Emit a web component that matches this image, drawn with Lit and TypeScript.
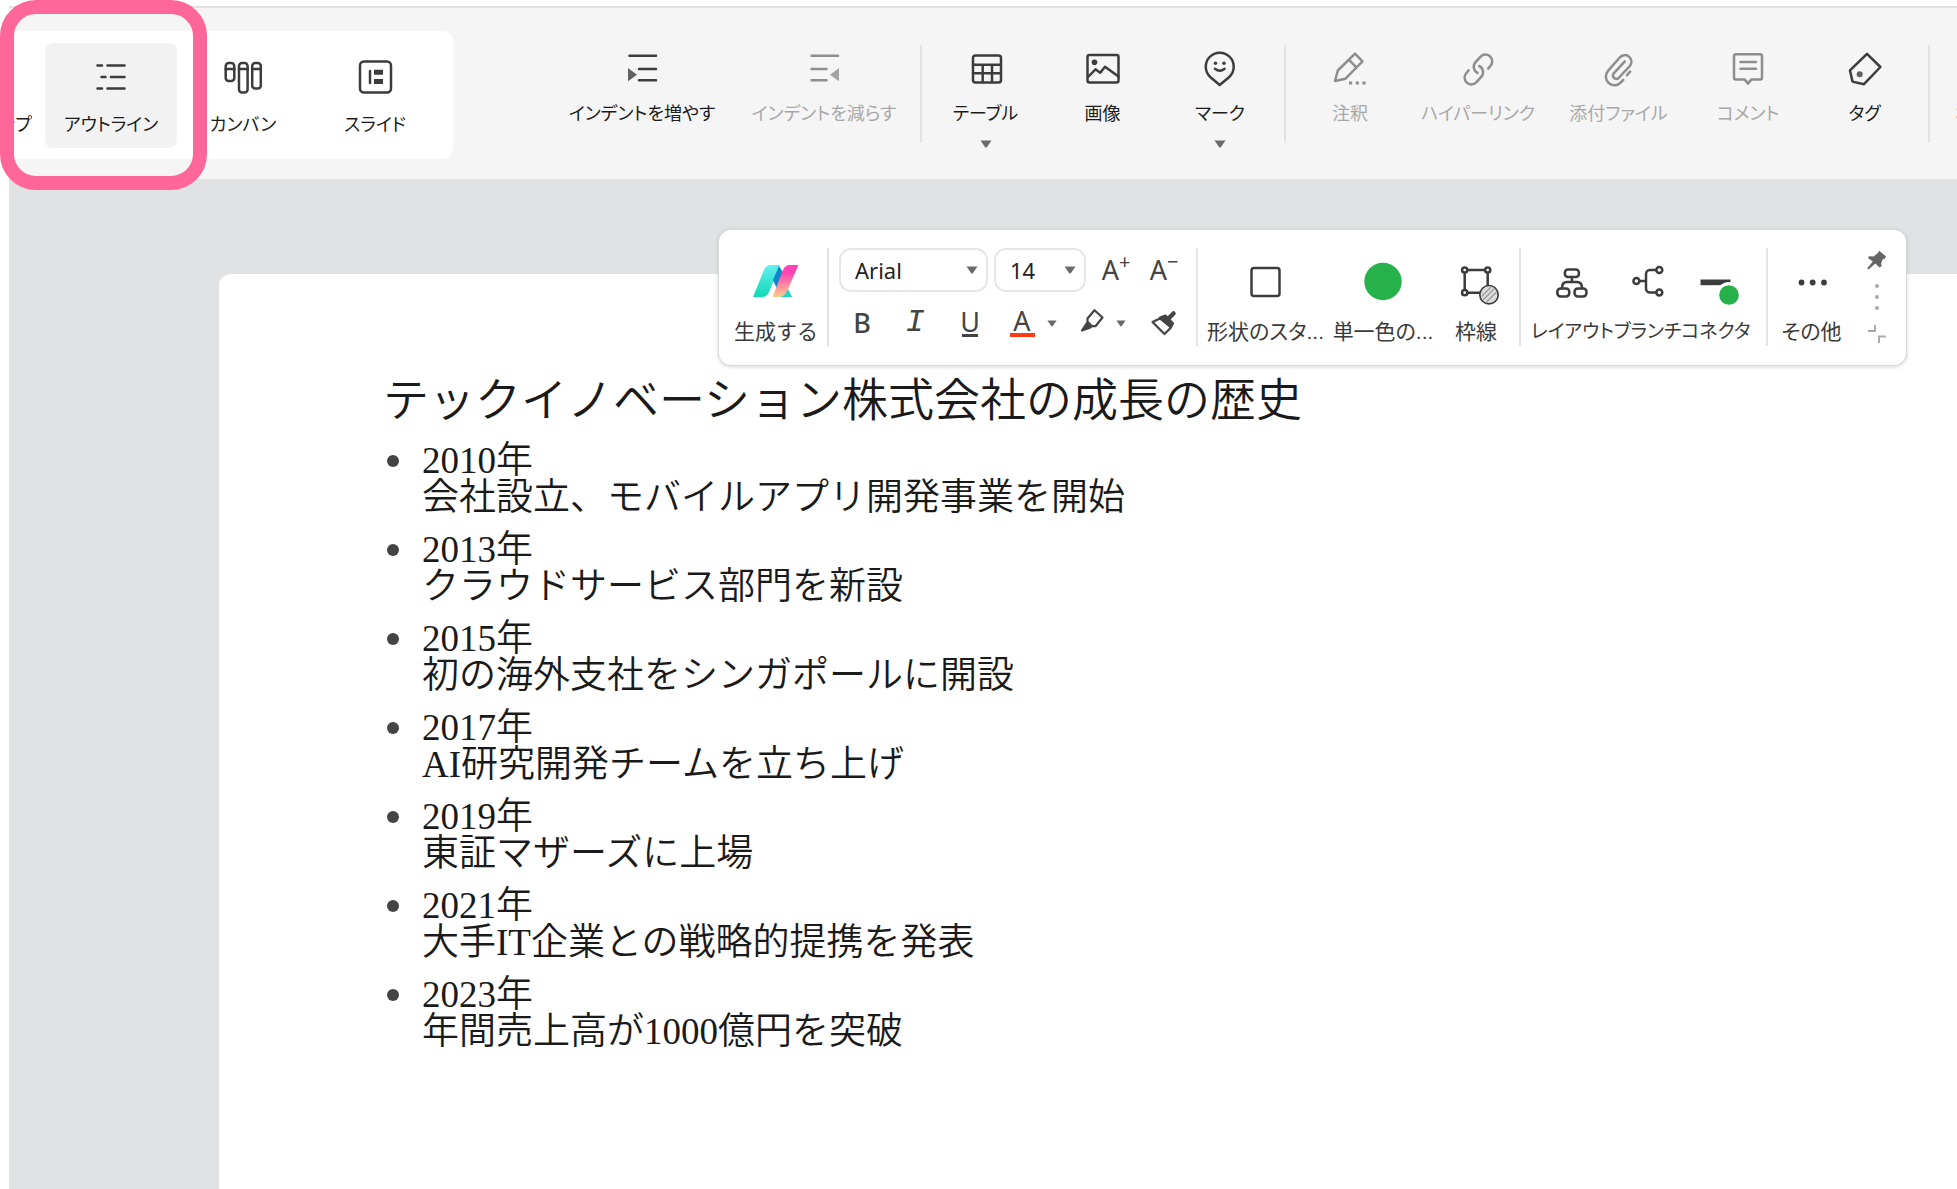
import { LitElement, html, css, svg, nothing, type TemplateResult } from "lit";
import { customElement, property } from "lit/decorators.js";
import { classMap } from "lit/directives/class-map.js";

type Art = ReturnType<typeof svg>;

const art: Record<string, Art> = {
  outline: svg`<path d="M6.5 8.5H11M16.5 8.5H33.5M10.5 20H14.5M20 20H33.5M6.5 31.5H11M16.5 31.5H33.5"/>`,
  kanban: svg`<rect x="2.7" y="6" width="8.6" height="18" rx="3"/><rect x="16" y="6" width="8.6" height="29.5" rx="3"/><rect x="29.2" y="6" width="8.6" height="25.5" rx="3"/><path d="M2.7 12H11.3M16 12H24.6M29.2 12H37.8"/>`,
  slide: svg`<rect x="5" y="4.5" width="31" height="31" rx="4"/><path d="M15 14V26"/><path class="solid" d="M19 12.7h9v5h-9zM19 22h9v5h-9z"/>`,
  indent: svg`<path d="M7.5 7.7H34M17 21H34M17 32.3H34"/><path class="solid soft" d="M6 20L15 26.7L6 33.3Z"/>`,
  outdent: svg`<path d="M7.5 7.7H34M7.5 21H22.5M7.5 32.3H22.5"/><path class="solid soft" d="M35 20L26 26.7L35 33.3Z"/>`,
  table: svg`<rect x="7" y="7.5" width="28" height="27" rx="2.5"/><path d="M7 16.7H35M7 25.3H35M16.7 16.7V34M26 16.7V34"/>`,
  image: svg`<rect x="4.5" y="7" width="31" height="27.5" rx="2"/><circle class="solid" cx="11.5" cy="14.3" r="2.8"/><path d="M5 29L12.5 21.3L17.2 24.7L22 18.7L35.5 28.5"/>`,
  mark: svg`<path d="M19.7 37L10.5 29.2A14 14 0 1 1 29 29.2Z"/><circle class="solid" cx="15.5" cy="15.3" r="1.7"/><circle class="solid" cx="24" cy="15.3" r="1.7"/><path d="M15 20.8Q19.8 24.6 24.6 20.8"/>`,
  note: svg`<path d="M5 33L7.8 22.5L25 5.6L32.5 13.3L15.5 30.7ZM19 11.8L26.4 19.4"/><path class="solid" d="M19 33.4h3.2v3.2H19zM25.7 33.4h3.2v3.2h-3.2zM32.4 33.4h3.2v3.2h-3.2z"/>`,
  link: svg`<path d="M30.2 20.6L32.6 17.8A6.8 6.8 0 0 0 22.6 8.6L17.6 14.2A6.8 6.8 0 0 0 19.6 25"/><path transform="rotate(180 20.4 21.5)" d="M30.2 20.6L32.6 17.8A6.8 6.8 0 0 0 22.6 8.6L17.6 14.2A6.8 6.8 0 0 0 19.6 25"/>`,
  clip: svg`<path d="M24.3 31.8L21.9 34.3A8.6 8.6 0 0 1 9 22.8L21.2 9A6.6 6.6 0 0 1 31 17.8L19.6 30A3.4 3.4 0 0 1 14.5 25.6L25.8 13.3M31.2 23.6L28 27.2"/>`,
  comment: svg`<path d="M8 6.2H32A2 2 0 0 1 34 8.2V29.6A2 2 0 0 1 32 31.6H23.2L20 35.6L16.8 31.6H8A2 2 0 0 1 6 29.6V8.2A2 2 0 0 1 8 6.2Z"/><path d="M12.5 14H28M12.5 20.8H28"/>`,
  tag: svg`<path d="M22 5.8L35.4 19L19 36.2L7.5 33.6L5 22.4Z"/><circle class="solid soft" cx="14.7" cy="26.3" r="3"/>`,
  find: svg`<circle cx="18" cy="18" r="11"/><path d="M26 26L34 34"/>`,
  shape: svg`<rect x="6.5" y="6" width="28" height="28" rx="2.5"/>`,
  fill: svg`<circle class="green" cx="20" cy="19.5" r="18.7"/>`,
  border: svg`<path d="M12 8H28.5M8.7 11V27.5M31.7 11V24M12 30.7H24"/><circle cx="8.7" cy="8" r="2.6"/><circle cx="31.7" cy="8" r="2.6"/><circle cx="8.7" cy="30.7" r="2.6"/><circle class="ball" cx="33" cy="32.7" r="9.2"/><path class="hatch" d="M26 34L34.5 25.5M27.5 37.5L38 27M31 39.5L40 30.5"/>`,
  layout: svg`<rect x="12.9" y="7.5" width="14" height="7.5" rx="3"/><rect x="5.3" y="26.5" width="12" height="8" rx="3.4"/><rect x="22.5" y="26.5" width="12" height="8" rx="3.4"/><path d="M19.9 15V20M10 26C10 22 11.5 20 15 20H25C28.5 20 30 22 30 26"/>`,
  branch: svg`<circle cx="8.4" cy="19" r="3"/><circle cx="31.3" cy="8" r="3"/><circle cx="31.3" cy="30.5" r="3"/><path d="M28 8H22A4 4 0 0 0 18 12V26.5A4 4 0 0 0 22 30.5H28M11.5 19H18"/>`,
  connector: svg`<path class="solid" d="M4.5 17.5H34.5V23.2H4.5Z"/><circle class="halo" cx="33" cy="33" r="13"/><circle class="green" cx="33" cy="33" r="9.8"/>`,
  more: svg`<circle class="solid" cx="9.5" cy="20.5" r="2.9"/><circle class="solid" cx="20.7" cy="20.5" r="2.9"/><circle class="solid" cx="32" cy="20.5" r="2.9"/>`,
};

const chevron = html`<svg class="chevron" viewBox="0 0 12 8" aria-hidden="true"><path d="M.5 .5H11.5L7 6.9Q6 8 5 6.9Z"/></svg>`;

const iconStyles = css`
  .icon {
    width: 40px;
    height: 40px;
    overflow: visible;
    fill: none;
    stroke: currentColor;
    stroke-width: 2.5;
    stroke-linecap: round;
    stroke-linejoin: round;
    flex: none;
  }
  .icon .solid { fill: currentColor; stroke: none; }
  .icon .soft { opacity: 0.8; }
  .icon .green { fill: #27b14b; stroke: none; }
  .icon .halo { fill: #fff; stroke: none; }
  .icon .ball { fill: #ddd; stroke-width: 1.6; }
  .icon .hatch { stroke: #999; stroke-width: 1.2; }
  .chevron { width: 12px; height: 8px; fill: #6a6a6a; flex: none; }
`;

const buttonReset = css`
  * { box-sizing: border-box; }
  button {
    margin: 0;
    padding: 0;
    border: 0;
    background: none;
    font: inherit;
    color: inherit;
    cursor: pointer;
  }
`;

@customElement("tool-button")
export class ToolButton extends LitElement {
  @property() icon = "";
  @property() label = "";
  @property({ type: Boolean }) menu = false;
  @property({ type: Boolean }) disabled = false;
  @property({ type: Boolean }) floating = false;

  static styles = [
    buttonReset,
    iconStyles,
    css`
      :host { display: flex; justify-content: center; min-width: 0; }
      .tool {
        display: flex;
        flex-direction: column;
        align-items: center;
        align-self: flex-start;
        gap: 11px;
        color: #3c3c3c;
        white-space: nowrap;
      }
      .text {
        font-size: 18px;
        line-height: 30px;
        color: #1c1c1c;
        font-feature-settings: "palt";
      }
      .tool:disabled { color: #8e8e8e; cursor: default; }
      .tool:disabled .text { color: #a8a8a8; }
      .floating { gap: 15px; }
      .floating .text { font-size: var(--label-size, 21px); color: #3a3a3a; }
    `,
  ];

  render() {
    return html`<button type="button" class=${classMap({ tool: true, floating: this.floating })} ?disabled=${this.disabled}>
      <svg class="icon" viewBox="0 0 40 40" aria-hidden="true">${art[this.icon]}</svg>
      <span class="text">${this.label}</span>
      ${this.menu ? chevron : nothing}
    </button>`;
  }
}

@customElement("view-switch")
export class ViewSwitch extends LitElement {
  static styles = [
    buttonReset,
    iconStyles,
    css`
      :host {
        display: flex;
        flex: none;
        align-items: center;
        padding: 12px 12px 12px 0;
        background: #fff;
        border-radius: 0 10px 10px 0;
      }
      .view {
        display: flex;
        flex-direction: column;
        align-items: center;
        gap: 13px;
        width: 132px;
        height: 105px;
        padding-top: 14px;
        border-radius: 8px;
        color: #3c3c3c;
      }
      .clipped {
        width: 23px;
        margin-right: 13px;
        align-items: flex-end;
        overflow: hidden;
      }
      .selected { background: #f2f2f2; }
      .text {
        font-size: 18px;
        line-height: 30px;
        color: #1c1c1c;
        white-space: nowrap;
        font-feature-settings: "palt";
      }
      .spacer { width: 40px; height: 40px; flex: none; }
    `,
  ];

  render() {
    const views = [
      { icon: "outline", label: "アウトライン" },
      { icon: "kanban", label: "カンバン" },
      { icon: "slide", label: "スライド" },
    ];
    return html`
      <button type="button" class="view clipped"><span class="spacer"></span><span class="text">マップ</span></button>
      ${views.map(
        (v, i) => html`<button type="button" aria-pressed=${i === 0} class=${classMap({ view: true, selected: i === 0 })}>
          <svg class="icon" viewBox="0 0 40 40" aria-hidden="true">${art[v.icon]}</svg>
          <span class="text">${v.label}</span>
        </button>`
      )}
    `;
  }
}

@customElement("format-bar")
export class FormatBar extends LitElement {
  static styles = [
    buttonReset,
    iconStyles,
    css`
      :host {
        display: flex;
        height: 135px;
        padding: 18px 7px 19px 0;
        background: #fff;
        border-radius: 12px;
        box-shadow: 0 0 0 1px #d8d9da, 0 1px 5px rgba(0, 0, 0, 0.22);
      }
      .group {
        display: grid;
        flex: none;
        padding-top: 14px;
        border-right: 2px solid #e4e4e4;
      }
      .generate { grid-template-columns: 102px; padding-left: 6px; }
      .shapes { grid-template-columns: 135px 100px 86px; }
      .links { display: flex; width: 247px; padding-left: 10px; --label-size: 19px; }
      .extra { grid-template-columns: 87px; border-right: 0; }
      .brand {
        display: flex;
        flex-direction: column;
        align-items: center;
        gap: 15px;
        align-self: start;
        color: #3a3a3a;
      }
      .brand svg { width: 46px; height: 32px; margin: 3px 0 5px; }
      .text { font-size: 21px; line-height: 30px; }
      .fonts {
        display: flex;
        flex-direction: column;
        flex: none;
        width: 369px;
        gap: 9px;
        padding-left: 10px;
        border-right: 2px solid #e4e4e4;
        color: #444;
        font-family: "Noto Sans", sans-serif;
      }
      .row { display: flex; align-items: center; height: 44px; }
      .pick { display: grid; align-items: center; margin-right: 6px; }
      .pick > * { grid-area: 1 / 1; }
      .pick .chevron { justify-self: end; margin-right: 10px; pointer-events: none; }
      select {
        appearance: none;
        height: 44px;
        padding: 0 14px;
        border: 2px solid #e6e6e6;
        border-radius: 12px;
        background: #fff;
        color: #222;
        font: 22px "Noto Sans", sans-serif;
      }
      .family select { width: 149px; }
      .size select { width: 92px; }
      .glyph {
        display: flex;
        align-items: center;
        justify-content: center;
        width: 50px;
        height: 44px;
        font-size: 27px;
        line-height: 30px;
      }
      .step { width: 48px; }
      .step sup { font-size: 20px; line-height: 10px; align-self: flex-start; padding-top: 9px; }
      .bold { width: 46px; font-weight: 500; }
      .italic { width: 60px; font-family: "Liberation Mono", monospace; font-style: italic; font-size: 32px; }
      .under span {
        display: flex;
        justify-content: center;
        width: 16px;
        line-height: 24px;
        border-bottom: 3px solid currentColor;
      }
      .color { width: 72px; gap: 12px; padding-left: 4px; }
      .color span { width: 25px; line-height: 24px; border-bottom: 4px solid #ff3b12; text-align: center; }
      .color .chevron, .marker .chevron { width: 10px; height: 7px; }
      .marker { width: 72px; gap: 10px; }
      .draw {
        width: 26px;
        height: 26px;
        overflow: visible;
        fill: none;
        stroke: currentColor;
        stroke-width: 2.2;
        stroke-linejoin: round;
        stroke-linecap: round;
      }
      .draw .solid { fill: currentColor; }
      .handle { display: flex; flex-direction: column; align-items: center; width: 44px; padding-top: 2px; gap: 13px; }
      .handle svg { display: block; width: 20px; height: 20px; fill: none; stroke: #aaa; stroke-width: 2; overflow: visible; }
      .handle .pin { fill: #666; stroke: none; }
      .handle .dots { height: 28px; fill: #aaa; stroke: none; }
    `,
  ];

  render() {
    const tool = (icon: string, label: string): TemplateResult =>
      html`<tool-button floating icon=${icon} label=${label}></tool-button>`;
    return html`
      <div class="group generate">
        <button type="button" class="brand">
          <svg viewBox="0 0 46 32" aria-hidden="true">
            <defs>
              <linearGradient id="teal" x1="0" y1="0" x2="0" y2="1"><stop offset="0" stop-color="#66eef0" /><stop offset="1" stop-color="#10d9b4" /></linearGradient>
              <linearGradient id="pink" x1="0" y1="0" x2="0" y2="1"><stop offset=".25" stop-color="#ff44b4" /><stop offset="1" stop-color="#ffcf8e" /></linearGradient>
            </defs>
            <path fill="#1ad6c8" d="M33 20L39 32H27Z" />
            <path fill="url(#teal)" d="M0 32L11 5Q13 0 18 0H27L16 27Q14 32 9 32Z" />
            <path fill="#1086cc" d="M26 1L31 9L24 24L20 15Z" />
            <path fill="url(#pink)" d="M19.5 32L30 5Q32 0 37 0H45.5L35 24Q32 32 26 32Z" />
          </svg>
          <span class="text">生成する</span>
        </button>
      </div>
      <div class="fonts">
        <div class="row">
          <label class="pick family"><select aria-label="フォント"><option>Arial</option></select>${chevron}</label>
          <label class="pick size"><select aria-label="フォントサイズ"><option>14</option></select>${chevron}</label>
          <button type="button" class="glyph step">A<sup>+</sup></button>
          <button type="button" class="glyph step">A<sup>−</sup></button>
        </div>
        <div class="row">
          <button type="button" class="glyph bold">B</button>
          <button type="button" class="glyph italic">I</button>
          <button type="button" class="glyph under"><span>U</span></button>
          <button type="button" class="glyph color"><span>A</span>${chevron}</button>
          <button type="button" class="glyph marker" aria-label="蛍光ペン">
            <svg class="draw" viewBox="0 0 26 26"><path d="M14.5 .2L22.5 7.5L15.5 16.2H10.5L7.5 12.5V8.5ZM7.5 11.5L12 16.5" /><path class="solid" d="M6.5 13.5L2 20.5L10.5 17.5Z" /></svg>
            ${chevron}
          </button>
          <button type="button" class="glyph" aria-label="書式のコピー">
            <svg class="draw" viewBox="0 0 26 26"><path d="M1.5 12L9 8.5L20 17.5L13.5 24Z" /><path class="solid" d="M9 7.5L14.5 5.5L22 13.5L20 17Z" /><path d="M17.5 8.5L22.5 3.5" stroke-width="4.5" /></svg>
          </button>
        </div>
      </div>
      <div class="group shapes">
        ${tool("shape", "形状のスタ...")} ${tool("fill", "単一色の...")} ${tool("border", "枠線")}
      </div>
      <div class="group links">
        ${tool("layout", "レイアウト")}${tool("branch", "ブランチ")}${tool("connector", "コネクタ")}
      </div>
      <div class="group extra">${tool("more", "その他")}</div>
      <div class="handle">
        <button type="button" aria-label="固定">
          <svg class="pin" viewBox="0 0 20 20"><path d="M12.3 .7L19 6.6L17.4 9L15.9 9L14.2 13.2L14.5 16.3L12.5 17.5L8.3 13.4L1.5 19.5L.2 18.3L5.8 11.5L1 8L2 6.2L6.5 6.4L11 3Z" /></svg>
        </button>
        <svg class="dots" viewBox="0 0 20 28" aria-hidden="true"><circle cx="10" cy="3" r="2" /><circle cx="10" cy="14" r="2" /><circle cx="10" cy="25" r="2" /></svg>
        <button type="button" aria-label="折りたたむ">
          <svg viewBox="0 0 20 20"><path d="M8 1V7H1M19 12.5H12V19" /></svg>
        </button>
      </div>
    `;
  }
}

@customElement("app-root")
export class AppRoot extends LitElement {
  static styles = [
    buttonReset,
    css`
      :host {
        display: flex;
        flex-direction: column;
        position: relative;
        min-height: 100vh;
        padding: 6px 0 0 9px;
        box-sizing: border-box;
        overflow: hidden;
        background: #fff;
        font-family: "Liberation Sans", "Noto Sans CJK JP", sans-serif;
      }
      .ribbon {
        display: flex;
        height: 173px;
        padding: 23px 0 20px;
        border-top: 2px solid #e0e0e0;
        background: #f5f5f5;
        overflow: hidden;
      }
      .tools {
        display: grid;
        flex: none;
        height: 98px;
        margin-top: 14px;
        padding: 3px 5px 0;
        border-right: 2px solid #e2e2e2;
      }
      .indents { grid-template-columns: 182px 182px; margin-left: 93px; }
      .inserts { grid-template-columns: 117px 117px 118px; }
      .notes { grid-template-columns: 118px 138px 143px 116px 117px; }
      .rest { grid-template-columns: 130px; border-right: 0; }
      .stage {
        display: flex;
        flex: 1;
        padding: 95px 0 0 210px;
        background: #e1e2e4;
      }
      .sheet {
        flex: 1;
        padding: 99px 40px 40px 164px;
        border-radius: 12px 0 0 0;
        background: #fff;
        color: #1a1a1a;
        font-family: "Liberation Serif", "Noto Sans CJK JP", serif;
      }
      h1 { margin: 0 0 13px; font-size: 46px; line-height: 56px; font-weight: 350; }
      ul {
        display: flex;
        flex-direction: column;
        gap: 15px;
        margin: 0;
        padding: 0;
        list-style: none;
      }
      li { display: flex; gap: 23px; font-size: 37px; line-height: 37px; font-weight: 350; }
      .dot {
        width: 12px;
        height: 12px;
        flex: none;
        margin: 13px 0 0 4px;
        border-radius: 50%;
        background: #444;
      }
      .topic { margin: 0; }
      .floating-bar { position: absolute; top: 230px; left: 719px; }
      .focus-ring {
        position: absolute;
        top: 0;
        left: 0;
        width: 207px;
        height: 190px;
        border: 14px solid #ff6699;
        border-radius: 36px;
        pointer-events: none;
      }
    `,
  ];

  private topics = [
    ["2010年", "会社設立、モバイルアプリ開発事業を開始"],
    ["2013年", "クラウドサービス部門を新設"],
    ["2015年", "初の海外支社をシンガポールに開設"],
    ["2017年", "AI研究開発チームを立ち上げ"],
    ["2019年", "東証マザーズに上場"],
    ["2021年", "大手IT企業との戦略的提携を発表"],
    ["2023年", "年間売上高が1000億円を突破"],
  ];

  render() {
    return html`
      <header class="ribbon">
        <view-switch></view-switch>
        <div class="tools indents">
          <tool-button icon="indent" label="インデントを増やす"></tool-button>
          <tool-button icon="outdent" label="インデントを減らす" disabled></tool-button>
        </div>
        <div class="tools inserts">
          <tool-button icon="table" label="テーブル" menu></tool-button>
          <tool-button icon="image" label="画像"></tool-button>
          <tool-button icon="mark" label="マーク" menu></tool-button>
        </div>
        <div class="tools notes">
          <tool-button icon="note" label="注釈" disabled></tool-button>
          <tool-button icon="link" label="ハイパーリンク" disabled></tool-button>
          <tool-button icon="clip" label="添付ファイル" disabled></tool-button>
          <tool-button icon="comment" label="コメント" disabled></tool-button>
          <tool-button icon="tag" label="タグ"></tool-button>
        </div>
        <div class="tools rest">
          <tool-button icon="find" label="検索と置換"></tool-button>
        </div>
      </header>
      <main class="stage">
        <article class="sheet">
          <h1>テックイノベーション株式会社の成長の歴史</h1>
          <ul>
            ${this.topics.map(
              ([year, event]) => html`<li>
                <span class="dot"></span>
                <p class="topic">${year}<br />${event}</p>
              </li>`
            )}
          </ul>
        </article>
      </main>
      <format-bar class="floating-bar"></format-bar>
      <div class="focus-ring"></div>
    `;
  }
}
